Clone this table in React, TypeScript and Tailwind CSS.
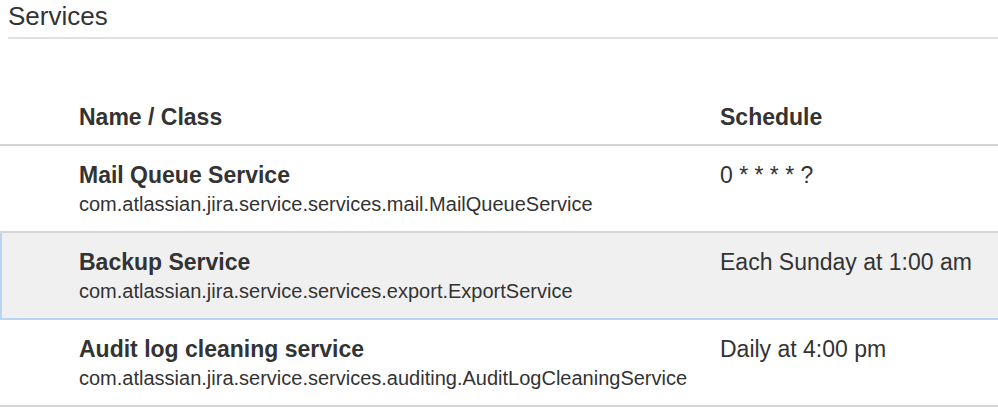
const services = [
  {
    name: 'Mail Queue Service',
    cls: 'com.atlassian.jira.service.services.mail.MailQueueService',
    schedule: '0 * * * * ?',
  },
  {
    name: 'Backup Service',
    cls: 'com.atlassian.jira.service.services.export.ExportService',
    schedule: 'Each Sunday at 1:00 am',
    selected: true,
  },
  {
    name: 'Audit log cleaning service',
    cls: 'com.atlassian.jira.service.services.auditing.AuditLogCleaningService',
    schedule: 'Daily at 4:00 pm',
  },
];

export default function App() {
  return (
    <div className="w-[998px] h-[415px] overflow-hidden bg-white text-[#333] font-['Liberation_Sans',Arial,sans-serif]">
      <div className="ml-2 pt-px pb-[6px] border-b-2 border-[#e0e0e0]">
        <h1 className="text-[26px] leading-[30px] font-normal">Services</h1>
      </div>

      <div className="mt-[64px]">
        <div className="grid grid-cols-[641px_1fr] pl-[79px] pb-[13px] border-b-2 border-[#d4d4d4] text-[23px] leading-[28px] font-bold">
          <div>Name / Class</div>
          <div>Schedule</div>
        </div>

        {services.map((s) => (
          <div
            key={s.name}
            className={`grid grid-cols-[641px_1fr] h-[87px] pt-[15px] border-b-2 ${
              s.selected
                ? 'bg-[#f0f0f0] border-l-2 border-l-[#b9d5f5] border-b-[#b9d5f5] pl-[77px]'
                : 'border-[#d4d4d4] pl-[79px]'
            }`}
          >
            <div>
              <div className="text-[23px] leading-[28px] font-bold">{s.name}</div>
              <div className="text-[20px] leading-[30px]">{s.cls}</div>
            </div>
            <div className="text-[23px] leading-[28px]">{s.schedule}</div>
          </div>
        ))}
      </div>
    </div>
  );
}
